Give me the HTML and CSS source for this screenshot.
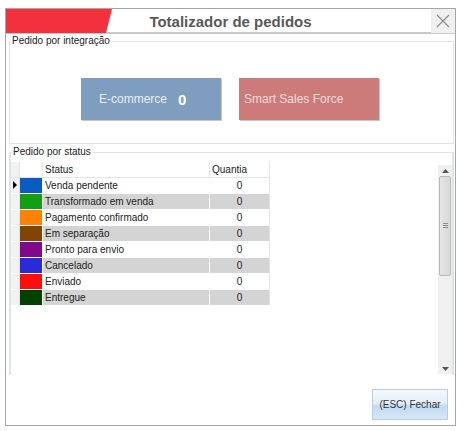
FILE: index.html
```html
<!DOCTYPE html>
<html>
<head>
<meta charset="utf-8">
<link rel="stylesheet" href="styles.css">
</head>
<body>
<div class="window">
  <div class="titlebar">
    <div class="tab-cell"><div class="red-tab"></div></div>
    <div class="title">Totalizador de pedidos</div>
    <div class="close-cell">
      <div class="close">
        <svg width="14" height="14" viewBox="0 0 14 14"><path d="M1 1 L13 13 M13 1 L1 13" stroke="#8a8a8a" stroke-width="1.1" fill="none"/></svg>
      </div>
    </div>
  </div>
  <div class="content">
    <fieldset class="group group-int">
      <legend>Pedido por integração</legend>
      <div class="tiles">
        <div class="tile tile-ecom"><span class="tile-label">E-commerce</span><span class="tile-num">0</span></div>
        <div class="tile tile-ssf"><span class="tile-label">Smart Sales Force</span></div>
      </div>
    </fieldset>
    <fieldset class="group group-status">
      <legend>Pedido por status</legend>
      <div class="grid">
        <div class="table">
          <div class="row head">
            <div class="c ind"></div><div class="c col"></div><div class="c st">Status</div><div class="c qt">Quantia</div>
          </div>
          <div class="row"><div class="c ind"><span class="arrow"></span></div><div class="c col"><span class="sw" style="background:#0a5bc2"></span></div><div class="c st">Venda pendente</div><div class="c qt">0</div></div>
          <div class="row alt"><div class="c ind"></div><div class="c col"><span class="sw" style="background:#12a012"></span></div><div class="c st">Transformado em venda</div><div class="c qt">0</div></div>
          <div class="row"><div class="c ind"></div><div class="c col"><span class="sw" style="background:#ff8207"></span></div><div class="c st">Pagamento confirmado</div><div class="c qt">0</div></div>
          <div class="row alt"><div class="c ind"></div><div class="c col"><span class="sw" style="background:#834307"></span></div><div class="c st">Em separação</div><div class="c qt">0</div></div>
          <div class="row"><div class="c ind"></div><div class="c col"><span class="sw" style="background:#82088a"></span></div><div class="c st">Pronto para envio</div><div class="c qt">0</div></div>
          <div class="row alt"><div class="c ind"></div><div class="c col"><span class="sw" style="background:#2a2ad6"></span></div><div class="c st">Cancelado</div><div class="c qt">0</div></div>
          <div class="row"><div class="c ind"></div><div class="c col"><span class="sw" style="background:#ff0d0d"></span></div><div class="c st">Enviado</div><div class="c qt">0</div></div>
          <div class="row alt"><div class="c ind"></div><div class="c col"><span class="sw" style="background:#014201"></span></div><div class="c st">Entregue</div><div class="c qt">0</div></div>
        </div>
        <div class="scrollbar">
          <div class="sb-btn"><svg width="7" height="4" viewBox="0 0 7 4"><path d="M0 4 L3.5 0 L7 4 Z" fill="#555"/></svg></div>
          <div class="sb-track">
            <div class="thumb"><span class="grip"></span></div>
          </div>
          <div class="sb-btn"><svg width="7" height="4" viewBox="0 0 7 4"><path d="M0 0 L7 0 L3.5 4 Z" fill="#555"/></svg></div>
        </div>
      </div>
    </fieldset>
    <div class="footer">
      <button class="btn-close">(ESC) Fechar</button>
    </div>
  </div>
</div>
</body>
</html>
```

FILE: styles.css
```css
html, body {
  margin: 0;
  background: #ffffff;
}
body {
  padding: 8px 10px 5px 5px;
  font-family: "Liberation Sans", Arial, sans-serif;
  font-size: 10px;
  color: #222;
}
.window {
  width: 449px;
  height: 416px;
  border: 1px solid #a6a6a6;
  display: flex;
  flex-direction: column;
  background: #fff;
}
.titlebar {
  height: 23px;
  border-bottom: 2px solid #c9c9c9;
  display: grid;
  grid-template-columns: 1fr auto 1fr;
  align-items: stretch;
}
.tab-cell {
  display: flex;
}
.red-tab {
  width: 106px;
  background: #f2313d;
  clip-path: polygon(0 0, 106px 0, 100px 100%, 0 100%);
}
.title {
  font-size: 15px;
  font-weight: bold;
  color: #595959;
  line-height: 23px;
  padding-top: 1px;
}
.close-cell {
  display: flex;
  justify-content: flex-end;
}
.close {
  width: 24px;
  background: #f0f0f0;
  display: flex;
  align-items: center;
  justify-content: center;
}
.content {
  flex: 1;
  display: flex;
  flex-direction: column;
  padding: 0 1px 0 3px;
}
.group {
  margin: 0;
  padding: 0;
  border: 1px solid #dde4eb;
  min-width: 0;
}
.group legend {
  padding: 0 2px;
  margin-left: 0;
  font-size: 10px;
  color: #222;
  line-height: 12px;
}
.group-int {
  height: 107px;
  margin-top: 1px;
}
.tiles {
  display: flex;
  gap: 18px;
  padding: 31px 0 0 71px;
}
.tile {
  width: 140px;
  height: 42px;
  display: flex;
  align-items: center;
  box-shadow: 1px 1px 0 #c8c8c8;
}
.tile-ecom {
  background: #7f9ebf;
  padding-left: 18px;
  box-sizing: border-box;
}
.tile-ssf {
  background: #cc7b7a;
  padding-left: 5px;
  box-sizing: border-box;
}
.tile-label {
  font-size: 12px;
  color: #e6edf5;
}
.tile-ssf .tile-label {
  color: #f4dcdc;
}
.tile-num {
  font-size: 15px;
  font-weight: bold;
  color: #fff;
  margin-left: 11px;
}
.group-status {
  margin-top: 2px;
  height: 226px;
  border-color: #dde4eb;
  border-width: 1px 2px 2px 2px;
}
.grid {
  display: flex;
  height: 218px;
  margin-top: 4px;
  background: #fff;
}
.table {
  flex: 1;
}
.row {
  display: flex;
  height: 16px;
}
.c {
  box-sizing: border-box;
  line-height: 15px;
  border-right: 1px solid #fff;
  border-bottom: 1px solid #fff;
  white-space: nowrap;
  overflow: hidden;
}
.ind {
  width: 9px;
  background: #f2f2f2;
  border-right: 1px solid #e2e2e2;
  position: relative;
}
.col {
  width: 23px;
}
.sw {
  display: block;
  height: 15px;
}
.st {
  width: 167px;
  padding-left: 2px;
}
.qt {
  width: 60px;
  text-align: center;
  border-right: 1px solid #e2e2e2;
}
.head .c {
  background: #fff;
  border-bottom: 1px solid #e4e4e4;
  border-right: 1px solid #e4e4e4;
}
.head .ind {
  background: #f2f2f2;
}
.head .qt {
  text-align: left;
  padding-left: 2px;
}
.alt .st, .alt .qt {
  background: #d4d4d4;
}
.arrow {
  position: absolute;
  left: 2px;
  top: 3px;
  width: 0;
  height: 0;
  border-top: 4.5px solid transparent;
  border-bottom: 4.5px solid transparent;
  border-left: 4px solid #000;
}
.scrollbar {
  width: 14px;
  margin: 3px 0 6px;
  background: #f0f0f0;
  display: flex;
  flex-direction: column;
}
.sb-btn {
  height: 11px;
  display: flex;
  align-items: center;
  justify-content: center;
}
.sb-track {
  flex: 1;
}
.thumb {
  margin: 0 1px;
  height: 100px;
  box-sizing: border-box;
  border: 1px solid #b9b9b9;
  border-radius: 2px;
  background: linear-gradient(to right, #e6e6e6, #d8d8d8);
  display: flex;
  align-items: center;
  justify-content: center;
}
.grip {
  width: 5px;
  height: 6px;
  background: repeating-linear-gradient(to bottom, #8a8a8a 0 1px, transparent 1px 2px);
}
.footer {
  flex: 1;
  display: flex;
  justify-content: flex-end;
  align-items: flex-end;
  padding: 0 6px 5px 0;
}
.btn-close {
  width: 76px;
  height: 31px;
  border: 1px solid #b7cde2;
  background: linear-gradient(to bottom, #f4f8fc 0%, #e4eef8 45%, #c3daf2 55%, #d6e6f6 100%);
  font-family: "Liberation Sans", Arial, sans-serif;
  font-size: 10px;
  color: #333;
  padding: 0;
}
```
